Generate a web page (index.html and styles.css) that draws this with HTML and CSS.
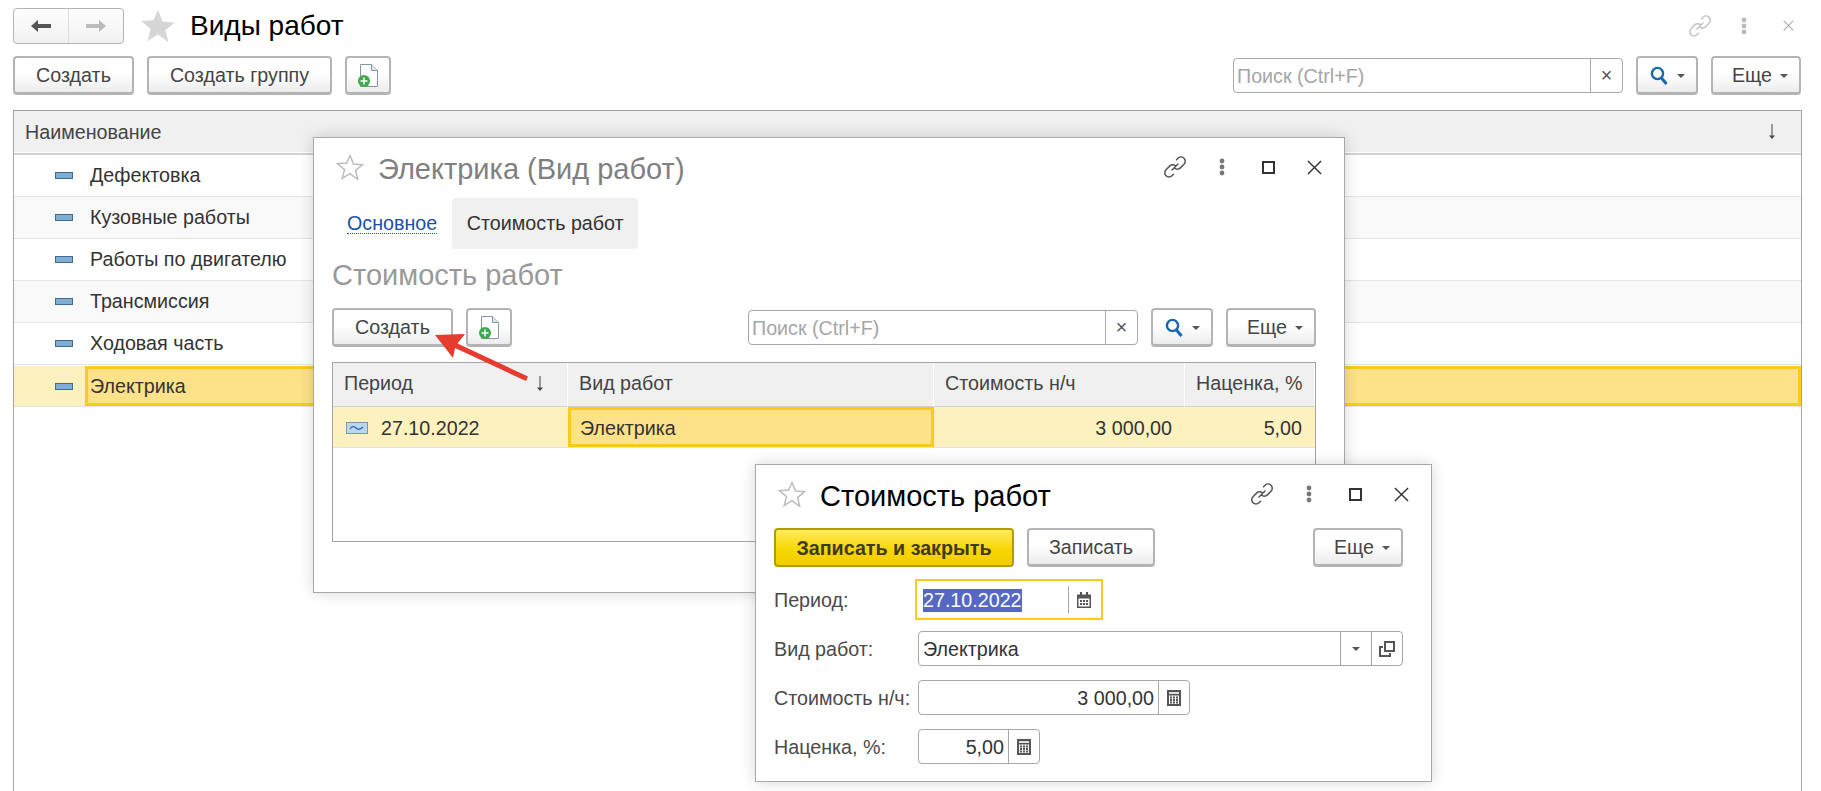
FILE: index.html
```html
<!DOCTYPE html>
<html lang="ru">
<head>
    <meta charset="UTF-8">
    <title>Виды работ</title>
    <link rel="stylesheet" href="styles.css">
</head>
<body>

<svg class="sprite" xmlns="http://www.w3.org/2000/svg">
    <symbol id="i-star" viewBox="0 0 28 26">
        <path d="M14 1.500l3.400 8.600 9.100.6-7 5.900 2.300 8.900L14 19.700l-7.800 4.800 2.300-8.900-7-5.900 9.100-.6z"/>
    </symbol>
    <symbol id="i-link" viewBox="0 0 24 24">
        <path d="M13.500 4.800l1.500-1.500a4.200 4.200 0 0 1 6 6l-3.600 3.600a4.200 4.200 0 0 1-6 0M10.500 19.200L9 20.700a4.200 4.200 0 0 1-6-6l3.600-3.600a4.200 4.200 0 0 1 6 0M9 15l6-6" fill="none" stroke-width="1.500" stroke-linecap="round"/>
    </symbol>
    <symbol id="i-dots" viewBox="0 0 6 18">
        <circle cx="3" cy="3" r="2.400"/><circle cx="3" cy="9" r="2.400"/><circle cx="3" cy="15" r="2.400"/>
    </symbol>
    <symbol id="i-close" viewBox="0 0 16 16">
        <path d="M1 1l14 14M15 1L1 15" fill="none" stroke-width="1.500"/>
    </symbol>
    <symbol id="i-newdoc" viewBox="0 0 20 23">
        <path d="M2.500.5h11l6 6v16h-17z" fill="#fff" stroke="#8b93a3" stroke-width="1"/>
        <path d="M13.500.5v6h6" fill="#dfe6f2" stroke="#8b93a3" stroke-width="1"/>
        <circle cx="6" cy="17" r="6" fill="#3fa74d"/>
        <path d="M6 13.500v7M2.500 17h7" stroke="#fff" stroke-width="1.500"/>
    </symbol>
    <symbol id="i-search" viewBox="0 0 18 20">
        <circle cx="7.500" cy="7.500" r="5.600" fill="none" stroke="#1769ad" stroke-width="2.400"/>
        <path d="M11.500 12l5 6" stroke="#1769ad" stroke-width="3"/>
    </symbol>
    <symbol id="i-sort" viewBox="0 0 10 16">
        <path d="M5 0v13" stroke="#444" stroke-width="1"/>
        <path d="M2 11.500h6L5 15z" fill="#444"/>
    </symbol>
    <symbol id="i-calendar" viewBox="0 0 14 16">
        <path d="M0 2.500h14V16H0z" fill="#555"/>
        <path d="M3 0h2v4H3zM9 0h2v4H9z" fill="#555"/>
        <path d="M1.500 6.500h11V14.500h-11z" fill="#fff"/>
        <path d="M3 8h2v2H3zM6 8h2v2H6zM9 8h2v2H9zM3 11h2v2H3zM6 11h2v2H6zM9 11h2v2H9z" fill="#555"/>
    </symbol>
    <symbol id="i-calc" viewBox="0 0 14 16">
        <path d="M0 0h14v16H0z" fill="#555"/>
        <path d="M2 2h10v2H2z" fill="#ddd"/>
        <path d="M2 5.500h10V14H2z" fill="#fff"/>
        <path d="M3 6.500h2v2H3zM6 6.500h2v2H6zM9 6.500h2v2H9zM3 9h2v2H3zM6 9h2v2H6zM9 9h2v2H9zM3 11.500h2v2H3zM6 11.500h2v2H6zM9 11.500h2v2H9z" fill="#555"/>
    </symbol>
    <symbol id="i-open" viewBox="0 0 16 16">
        <path d="M1 6h3M1 5v10h10v-3" fill="none" stroke="#555" stroke-width="2"/>
        <path d="M6 1h9v9H6z" fill="#fff" stroke="#555" stroke-width="2"/>
    </symbol>
</svg>

<div class="page">
    <div class="head">
        <div class="nav">
            <span class="nav-part">
                <svg class="nav-arrow" viewBox="0 0 22 14"><path d="M1 7l7-6v4h13v4H8v4z" fill="#555"/></svg>
            </span>
            <span class="nav-part">
                <svg class="nav-arrow" viewBox="0 0 22 14"><path d="M21 7l-7-6v4H1v4h13v4z" fill="#bbb"/></svg>
            </span>
        </div>
        <svg class="star-big"><use href="#i-star"/></svg>
        <h1 class="page-title">Виды работ</h1>
        <div class="win-tools win-tools-muted">
            <span class="tool"><svg class="ic-link"><use href="#i-link"/></svg></span>
            <span class="tool"><svg class="ic-dots"><use href="#i-dots"/></svg></span>
            <span class="tool"><svg class="ic-close-sm"><use href="#i-close"/></svg></span>
        </div>
    </div>

    <div class="toolbar toolbar-page">
        <button class="btn btn-create">Создать</button>
        <button class="btn btn-group">Создать группу</button>
        <button class="btn btn-icon"><svg class="ic-doc"><use href="#i-newdoc"/></svg></button>
        <div class="search">
            <span class="search-text">Поиск (Ctrl+F)</span>
            <span class="search-clear">×</span>
        </div>
        <button class="btn btn-find"><svg class="ic-search"><use href="#i-search"/></svg><span class="caret"></span></button>
        <button class="btn btn-more">Еще<span class="caret"></span></button>
    </div>

    <div class="list">
        <div class="list-head">
            <span>Наименование</span>
            <svg class="ic-sort"><use href="#i-sort"/></svg>
        </div>
        <div class="list-row"><span class="row-mark"><i class="item-icon"></i></span><span class="row-cell">Дефектовка</span></div>
        <div class="list-row list-row-alt"><span class="row-mark"><i class="item-icon"></i></span><span class="row-cell">Кузовные работы</span></div>
        <div class="list-row"><span class="row-mark"><i class="item-icon"></i></span><span class="row-cell">Работы по двигателю</span></div>
        <div class="list-row list-row-alt"><span class="row-mark"><i class="item-icon"></i></span><span class="row-cell">Трансмиссия</span></div>
        <div class="list-row"><span class="row-mark"><i class="item-icon"></i></span><span class="row-cell">Ходовая часть</span></div>
        <div class="list-row list-row-current"><span class="row-mark"><i class="item-icon"></i></span><span class="row-cell">Электрика</span></div>
    </div>
</div>

<!-- окно элемента -->
<div class="window window-item">
    <div class="win-head">
        <svg class="star-outline"><use href="#i-star"/></svg>
        <div class="win-title win-title-muted">Электрика (Вид работ)</div>
        <div class="win-tools">
            <span class="tool"><svg class="ic-link"><use href="#i-link"/></svg></span>
            <span class="tool"><svg class="ic-dots"><use href="#i-dots"/></svg></span>
            <span class="tool"><i class="ic-square"></i></span>
            <span class="tool"><svg class="ic-close"><use href="#i-close"/></svg></span>
        </div>
    </div>
    <div class="tabs">
        <a class="tab-link">Основное</a>
        <span class="tab-active">Стоимость работ</span>
    </div>
    <h2 class="section-title">Стоимость работ</h2>
    <div class="toolbar">
        <button class="btn btn-create">Создать</button>
        <button class="btn btn-icon"><svg class="ic-doc"><use href="#i-newdoc"/></svg></button>
        <div class="search">
            <span class="search-text">Поиск (Ctrl+F)</span>
            <span class="search-clear">×</span>
        </div>
        <button class="btn btn-find"><svg class="ic-search"><use href="#i-search"/></svg><span class="caret"></span></button>
        <button class="btn btn-more">Еще<span class="caret"></span></button>
    </div>
    <div class="prices">
        <div class="prices-head">
            <div class="th th-sorted">Период<svg class="ic-sort"><use href="#i-sort"/></svg></div>
            <div class="th">Вид работ</div>
            <div class="th">Стоимость н/ч</div>
            <div class="th">Наценка, %</div>
        </div>
        <div class="prices-row">
            <div class="td td-date">
                <svg class="ic-register" viewBox="0 0 22 12"><rect x=".5" y=".5" width="21" height="11" fill="#b9d8ec" stroke="#7d98ad"/><path d="M4 7c2-3 4-3 6-1s4 2 7-1" fill="none" stroke="#2a5fb5" stroke-width="1.200"/></svg>
                27.10.2022
            </div>
            <div class="td td-current">Электрика</div>
            <div class="td td-num">3 000,00</div>
            <div class="td td-num">5,00</div>
        </div>
    </div>
</div>

<!-- окно записи регистра -->
<div class="window window-record">
    <div class="win-head">
        <svg class="star-outline"><use href="#i-star"/></svg>
        <div class="win-title">Стоимость работ</div>
        <div class="win-tools">
            <span class="tool"><svg class="ic-link"><use href="#i-link"/></svg></span>
            <span class="tool"><svg class="ic-dots"><use href="#i-dots"/></svg></span>
            <span class="tool"><i class="ic-square"></i></span>
            <span class="tool"><svg class="ic-close"><use href="#i-close"/></svg></span>
        </div>
    </div>
    <div class="toolbar toolbar-record">
        <button class="btn btn-primary">Записать и закрыть</button>
        <button class="btn btn-save">Записать</button>
        <button class="btn btn-more btn-more-end">Еще<span class="caret"></span></button>
    </div>
    <div class="form-grid">
        <label>Период:</label>
        <div class="field field-date">
            <span class="field-value"><span class="selected">27.10.2022</span></span>
            <span class="field-btn field-btn-date"><svg class="ic-cal"><use href="#i-calendar"/></svg></span>
        </div>
        <label>Вид работ:</label>
        <div class="field field-wide">
            <span class="field-value">Электрика</span>
            <span class="field-btn field-btn-wide"><span class="caret"></span></span>
            <span class="field-btn field-btn-wide"><svg class="ic-open"><use href="#i-open"/></svg></span>
        </div>
        <label>Стоимость н/ч:</label>
        <div class="field field-cost">
            <span class="field-value field-value-num">3 000,00</span>
            <span class="field-btn"><svg class="ic-cal"><use href="#i-calc"/></svg></span>
        </div>
        <label>Наценка, %:</label>
        <div class="field field-markup">
            <span class="field-value field-value-num">5,00</span>
            <span class="field-btn"><svg class="ic-cal"><use href="#i-calc"/></svg></span>
        </div>
    </div>
</div>

<svg class="pointer" viewBox="0 0 110 60" xmlns="http://www.w3.org/2000/svg">
    <path d="M5 5L35 4 27.500 13.500 98 46.500 96 51 25 18 23 28z" fill="#e63c2f"/>
</svg>

</body>
</html>
```

FILE: styles.css
```css
* {
    box-sizing: border-box;
}
html, body {
    margin: 0;
    height: 791px;
    overflow: hidden;
}
body {
    font-family: "Liberation Sans", Arial, sans-serif;
    font-size: 19.7px;
    color: #333;
    background-color: #fff;
    position: relative;
}
.sprite {
    position: absolute;
    width: 0;
    height: 0;
}

/* page */
.page {
    height: 791px;
    display: flex;
    flex-direction: column;
}
.head {
    display: flex;
    align-items: center;
    height: 37px;
    margin-top: 7px;
    padding: 0 10px 0 13px;
}
.nav {
    display: flex;
    width: 111px;
    height: 36px;
    border: 1px solid #b4b4b4;
    border-radius: 4px;
    background: linear-gradient(#fff, #f0f0f0);
}
.nav-part {
    flex: 1;
    display: flex;
    align-items: center;
    justify-content: center;
}
.nav-part + .nav-part {
    border-left: 1px solid #ddd;
}
.nav-arrow {
    width: 22px;
    height: 14px;
}
.star-big {
    width: 38px;
    height: 35px;
    margin-left: 15px;
    fill: #d6d6d6;
}
.page-title {
    margin: 0 0 0 13px;
    font-size: 28px;
    font-weight: normal;
    color: #000;
}
.win-tools {
    margin-left: auto;
    display: flex;
    color: #666;
}
.tool {
    width: 46px;
    height: 24px;
    display: flex;
    align-items: center;
    justify-content: center;
}
.ic-link {
    width: 24px;
    height: 24px;
    stroke: #555;
}
.ic-dots {
    width: 6px;
    height: 18px;
    fill: #777;
}
.ic-close {
    width: 15px;
    height: 15px;
    stroke: #333;
}
.ic-close-sm {
    width: 11px;
    height: 11px;
    stroke: #aaa;
}
.ic-square {
    display: block;
    width: 13px;
    height: 13px;
    border: 2px solid #333;
}
.win-tools-muted .ic-link {
    stroke: #c4c4c4;
}
.win-tools-muted .ic-dots {
    fill: #bbb;
}
.win-tools-muted .tool {
    width: 44.5px;
}

/* buttons */
.toolbar {
    display: flex;
    align-items: center;
    gap: 13px;
    height: 39px;
}
.toolbar-page {
    margin-top: 12px;
    padding: 0 20px 0 13px;
}
.btn {
    height: 39px;
    padding: 1px 0 0;
    display: flex;
    align-items: center;
    justify-content: center;
    font-family: inherit;
    font-size: 19.7px;
    color: #444;
    border: 2px solid #b4b4b4;
    border-bottom-width: 3px;
    border-radius: 4px;
    background: linear-gradient(#fff 45%, #ececec);
}
.btn-create {
    width: 121px;
}
.btn-group {
    width: 185px;
}
.btn-icon {
    width: 46px;
}
.btn-find {
    width: 62px;
    gap: 9px;
}
.btn-more {
    width: 90px;
    gap: 8px;
    padding-left: 8px;
}
.btn-save {
    width: 128px;
}
.btn-more-end {
    margin-left: auto;
}
.btn-primary {
    width: 240px;
    font-weight: bold;
    color: #403a20;
    border: 2px solid #b39c0a;
    border-bottom-width: 2px;
    background: linear-gradient(#ffec5c, #f7d500 60%, #f2cd00);
}
.caret {
    display: block;
    width: 0;
    height: 0;
    border-left: 4px solid transparent;
    border-right: 4px solid transparent;
    border-top: 4px solid #555;
}
.ic-doc {
    width: 20px;
    height: 23px;
    margin-left: -1px;
}
.ic-search {
    width: 18px;
    height: 20px;
}

/* search */
.search {
    margin-left: auto;
    width: 390px;
    height: 35px;
    display: flex;
    align-items: center;
    border: 1px solid #a8a8a8;
    border-radius: 4px;
    background-color: #fff;
}
.search-text {
    flex: 1;
    padding: 2px 0 0 3px;
    color: #a6a6a6;
}
.search-clear {
    width: 32px;
    height: 33px;
    line-height: 32px;
    text-align: center;
    color: #555;
    border-left: 1px solid #a8a8a8;
}

/* main list */
.list {
    margin: 15px 19px 0 13px;
    flex: 1;
    border: 1px solid #a4a4a4;
    border-bottom: none;
}
.list-head {
    height: 44px;
    padding: 0 24px 0 11px;
    display: flex;
    align-items: center;
    justify-content: space-between;
    color: #444;
    background-color: #f0f0f0;
    border-bottom: 2px solid #d2d2d2;
    box-shadow: inset 0 -1px 0 #fff;
}
.ic-sort {
    width: 10px;
    height: 16px;
}
.list-row {
    height: 42px;
    display: flex;
    border-bottom: 1px solid #e4e4e4;
}
.list-row-alt {
    background-color: #f9f9f9;
}
.list-row-current {
    background-color: #fdf1bf;
    border-top: 1px solid #fff;
}
.row-mark {
    width: 71px;
    display: flex;
    align-items: center;
    padding-left: 41px;
}
.item-icon {
    display: block;
    width: 18px;
    height: 7px;
    background-color: #7fadd4;
    border: 1px solid #3f6c90;
}
.row-cell {
    flex: 1;
    display: flex;
    align-items: center;
    padding-left: 2px;
    border: 3px solid transparent;
}
.list-row-current .row-cell {
    background-color: #fde28a;
    border-color: #fbca1c;
}

/* windows */
.window {
    position: absolute;
    background-color: #fff;
    border: 1px solid #a8a8a8;
    box-shadow: 0 0 14px rgba(0, 0, 0, 0.16);
}
.window-item {
    left: 313px;
    top: 137px;
    width: 1032px;
    height: 456px;
    padding: 0 28px 0 18px;
}
.window-record {
    left: 755px;
    top: 464px;
    width: 677px;
    height: 318px;
    padding: 0 28px 0 18px;
}
.win-head {
    height: 58px;
    display: flex;
    align-items: center;
}
.star-outline {
    width: 28px;
    height: 26px;
    margin-left: 4px;
    fill: #fff;
    stroke: #bdbdbd;
    stroke-width: 1.500;
}
.win-title {
    margin-left: 14px;
    padding-top: 4px;
    font-size: 29px;
    color: #000;
}
.win-title-muted {
    color: #808080;
}
.window .win-tools {
    margin-right: -22px;
}
.window .tool {
    width: 46.500px;
}
.tabs {
    display: flex;
    align-items: center;
    height: 51px;
    margin-top: 2px;
}
.tab-link {
    margin-left: 15px;
    color: #1c4fa8;
    border-bottom: 1px dotted #1c4fa8;
    line-height: 20px;
}
.tab-active {
    margin-left: 15px;
    width: 186px;
    height: 51px;
    line-height: 51px;
    text-align: center;
    color: #333;
    background-color: #f0f0f0;
    border-radius: 4px;
}
.section-title {
    margin: 11px 0 0;
    font-size: 29px;
    line-height: 30px;
    font-weight: normal;
    color: #999;
    height: 48px;
}
.toolbar-record {
    gap: 13px;
    margin-top: 5px;
    height: 39px;
}

/* table in the item window */
.prices {
    margin-top: 15px;
    height: 180px;
    border: 1px solid #a4a4a4;
}
.prices-head,
.prices-row {
    display: grid;
    grid-template-columns: 235px 366px 251px 1fr;
}
.prices-row {
    height: 41px;
    background-color: #fdf1bf;
    border-bottom: 1px solid #e4e4e4;
}
.th {
    height: 44px;
    padding: 0 0 2px 11px;
    display: flex;
    align-items: center;
    color: #444;
    background-color: #f0f0f0;
    border-right: 1px solid #fff;
    border-bottom: 1px solid #d2d2d2;
}
.th-sorted {
    justify-content: space-between;
    padding-right: 22px;
}
.td {
    display: flex;
    align-items: center;
    padding: 2px 11px 0;
}
.td-date {
    padding-left: 13px;
    gap: 13px;
}
.ic-register {
    width: 22px;
    height: 12px;
}
.td-current {
    background-color: #fde28a;
    border: 3px solid #fbca1c;
    padding-left: 9px;
}
.td-num {
    justify-content: flex-end;
    padding-right: 13px;
}

/* record form */
.form-grid {
    display: grid;
    grid-template-columns: 144px 1fr;
    grid-auto-rows: 35px;
    row-gap: 14px;
    align-items: center;
    margin-top: 15px;
}
.form-grid label {
    padding-top: 2px;
    color: #4a4a4a;
}
.field {
    height: 35px;
    display: flex;
    align-items: center;
    border: 1px solid #a8a8a8;
    border-radius: 4px;
    background-color: #fff;
}
.field-date {
    width: 182px;
    border-color: #fff;
    outline: 2px solid #fbca1c;
    outline-offset: 1px;
    border-radius: 0;
}
.field-wide {
    width: 485px;
}
.field-cost {
    width: 272px;
}
.field-markup {
    width: 122px;
}
.field-value {
    flex: 1;
    padding: 2px 4px 0;
    color: #333;
}
.field-value-num {
    text-align: right;
}
.selected {
    display: inline-block;
    line-height: 23px;
    color: #fff;
    background-color: #5468c4;
}
.field-btn {
    width: 31px;
    height: 33px;
    display: flex;
    align-items: center;
    justify-content: center;
    border-left: 1px solid #a8a8a8;
}
.field-btn-date {
    height: 27px;
}
.ic-cal {
    width: 14px;
    height: 16px;
}
.ic-open {
    width: 16px;
    height: 16px;
}

/* red arrow on top of the picture */
.pointer {
    position: absolute;
    left: 430px;
    top: 330px;
    width: 110px;
    height: 60px;
}
```
